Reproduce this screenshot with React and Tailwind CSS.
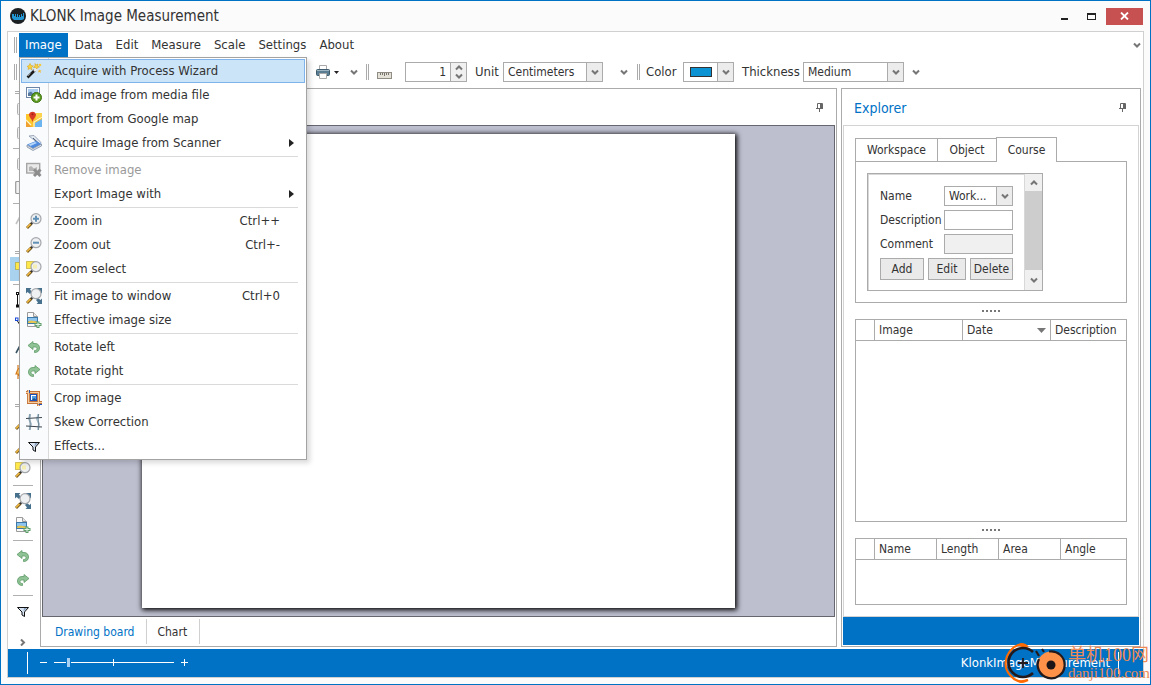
import { useState } from 'react';
import clsx from 'clsx';

/* ---------- icons ---------- */

function Svg({ children, className = 'w-4 h-4' }) {
  return (
    <svg viewBox="0 0 16 16" className={clsx('shrink-0', className)} fill="none" aria-hidden="true">
      {children}
    </svg>
  );
}

function WandIcon() {
  return (
    <Svg>
      <path d="M1.500 14.500 9 7" stroke="#1c1c1c" strokeWidth="2.600" />
      <path d="M2 13 4.500 10.500" stroke="#8a8a8a" strokeWidth="1" />
      <path d="M8 8 11 5.500" stroke="#e8e8e8" strokeWidth="2.600" />
      <path d="M1 3.500 3 2.500 4 0.500 5 2.500 7.500 3 5.500 4.500 6 7 4 5.500 2 6.500 2.500 4.500Z" fill="#f7d23a" stroke="#d39a1a" strokeWidth=".5" />
      <path d="M9 .500 10 2 12 1 11.500 3 13.500 4 11.500 4.500 11 6 9.500 4.500 7.500 4.500 9 3Z" fill="#f7d23a" stroke="#d39a1a" strokeWidth=".5" />
      <path d="M13 6.500 14 7.500 15.500 7 14.500 8.500 15 10 13.500 9 12 9.500 12.500 8Z" fill="#f3b93a" />
      <circle cx="14" cy="2" r="1.300" fill="#f6c93c" />
    </Svg>
  );
}

function AddPictureIcon() {
  return (
    <Svg>
      <rect x=".5" y=".5" width="13" height="10" fill="#fff" stroke="#6d86a8" />
      <rect x="2" y="2" width="10" height="7" fill="#a9cdf0" />
      <path d="M2 9V6L5 4.500 7 6.500 9 5 12 7V9Z" fill="#55789c" />
      <circle cx="10.500" cy="10.500" r="5" fill="#5c9a20" stroke="#3f7413" />
      <path d="M10.500 7.500V13.500M7.500 10.500H13.500" stroke="#fff" strokeWidth="2" />
    </Svg>
  );
}

function MapIcon() {
  return (
    <Svg>
      <path d="M0 3H16V16H0Z" fill="#fcc62c" />
      <path d="M0 10 6 16H0Z" fill="#f0a030" />
      <path d="M9 16V12L16 8V16Z" fill="#6db5f0" />
      <path d="M0 9 5 14M8 16V11L16 6" stroke="#fff4cf" strokeWidth="1.200" />
      <path d="M10 2H16V6L10 8Z" fill="#fbd34d" />
      <path d="M6.500 12C6.500 8 3 6.500 3 3.500A3.600 3.500 0 0 1 10 3.500C10 6.500 6.500 8 6.500 12Z" fill="#d93a25" />
      <circle cx="6.500" cy="3.300" r="1" fill="#a02216" />
    </Svg>
  );
}

function ScannerIcon() {
  return (
    <Svg>
      <path d="M3 1 8 .500 15 7.500 13 9Z" fill="#e6edf6" stroke="#8593a6" strokeWidth=".8" />
      <path d="M7 3 13 8.500" stroke="#44566e" strokeWidth="1" />
      <path d="M1 9.500 10 6 15.500 9 7 13.500Z" fill="#4f8be0" />
      <path d="M2.500 9.500 9 7 11 8 4.500 11Z" fill="#b8d8fa" />
      <path d="M1 10V12L7 15.500 15.500 11V9L7 13.500Z" fill="#d9dee6" stroke="#76859a" strokeWidth=".7" />
    </Svg>
  );
}

function RemovePictureIcon() {
  return (
    <Svg>
      <rect x=".7" y="1.500" width="13" height="9.500" fill="#e9e9e9" stroke="#a6a6a6" strokeWidth="1.400" />
      <path d="M3 9V5L5 4 8 6.500 11 5V9Z" fill="#b4b4b4" />
      <path d="M8 7.500 14.500 14M14.500 7.500 8 14" stroke="#8d8d8d" strokeWidth="3" />
    </Svg>
  );
}

function Lens({ children }) {
  return (
    <>
      <path d="M1 15 5.500 10.500" stroke="#7a5a1c" strokeWidth="2.800" />
      <path d="M1 14.500 4.500 11" stroke="#f0b840" strokeWidth="1.600" />
      <path d="M5 11 6.500 9.500" stroke="#333" strokeWidth="2" />
      <circle cx="10" cy="5.700" r="5" fill="#eef0f2" stroke="#a3a6aa" strokeWidth="1.200" />
      {children}
    </>
  );
}

function ZoomInIcon() {
  return (
    <Svg>
      <Lens><path d="M10 2.700V8.700M7 5.700H13" stroke="#5f8fb4" strokeWidth="2" /></Lens>
    </Svg>
  );
}

function ZoomOutIcon() {
  return (
    <Svg>
      <Lens><path d="M7 5.700H13" stroke="#5f8fb4" strokeWidth="2" /></Lens>
    </Svg>
  );
}

function ZoomSelectIcon() {
  return (
    <Svg>
      <rect x=".5" y=".5" width="9" height="7" fill="#ffe84a" stroke="#a8900c" strokeDasharray="1 1" />
      <Lens><path d="M7 3.500H11V7.500H7Z" fill="#f6efb4" /></Lens>
    </Svg>
  );
}

function FitIcon() {
  return (
    <Svg>
      <path d="M0 0H5.500L4 1.500 6 4 4 6 1.500 4 0 5.500ZM16 0H10.500L12 1.500 10 4 12 6 14.500 4 16 5.500ZM16 16H10.500L12 14.500 10 12 12 10 14.500 12 16 10.500Z" fill="#47708c" />
      <Lens />
    </Svg>
  );
}

function PageSizeIcon() {
  return (
    <Svg>
      <path d="M1.500.5H7.500L11.500 4.500V14.500H1.500Z" fill="#fafafa" stroke="#9a9a9a" />
      <path d="M7.500.5V4.500H11.500" stroke="#9a9a9a" fill="#e6e6e6" />
      <rect x="1" y="5" width="11" height="7" fill="#3c78a8" />
      <rect x="2" y="6" width="9" height="3" fill="#8cc4ee" />
      <path d="M2 9.500 5 8.500 11 9.500V11H2Z" fill="#e5c552" />
      <path d="M10.500 9.500H13.500V11H15.500V14H13.500V16H10.500V14H8.500V11H10.500Z" fill="#5f9e6b" />
      <path d="M12 10.500V15M9.500 12.500H14.500" stroke="#e6f4e7" strokeWidth="1" />
    </Svg>
  );
}

function RotateLeftIcon() {
  return (
    <Svg>
      <path d="M2 6.500 7 2.500V4.500H9C12 4.500 13.500 6.500 13.500 9S12 13.500 8.500 13.500V11.500C10.500 11.500 11 10.500 11 9.500S10 8 8.500 8H7V10.500Z" fill="#8fc294" stroke="#5e9a67" strokeWidth=".8" />
    </Svg>
  );
}

function RotateRightIcon() {
  return (
    <Svg>
      <path d="M14 6.500 9 2.500V4.500H7C4 4.500 2.500 6.500 2.500 9S4 13.500 7.500 13.500V11.500C5.500 11.500 5 10.500 5 9.500S6 8 7.500 8H9V10.500Z" fill="#8fc294" stroke="#5e9a67" strokeWidth=".8" />
    </Svg>
  );
}

function CropIcon() {
  return (
    <Svg>
      <path d="M2.500 0V12.500H16M0 2.500H12.500V16" stroke="#c4743a" strokeWidth="3" />
      <path d="M2.500 0V12.500H16M0 2.500H12.500V16" stroke="#f8cfa0" strokeWidth="1.200" />
      <rect x="4.500" y="4.500" width="6" height="6" fill="#fff" stroke="#1e52b8" />
      <path d="M6 6H10V10H6Z" fill="#4f9ce0" />
      <path d="M6 10 8 8 10 9.500V10Z" fill="#214f8a" />
      <path d="M3.500 0V3M12.500 14.500H16" stroke="#1e52b8" />
    </Svg>
  );
}

function SkewIcon() {
  return (
    <Svg>
      <path d="M4 0 3 5 5 10 3.500 16M12.500 0 11 5 13 10 12 16" stroke="#9db7c6" strokeWidth="1.800" />
      <path d="M0 4.500 16 3.500M0 12 16 13" stroke="#3d4852" strokeWidth="1.200" />
      <path d="M4 0V16M12.500 0V16" stroke="#5c7482" strokeWidth=".6" />
    </Svg>
  );
}

function FilterIcon() {
  return (
    <Svg>
      <path d="M2.500 4.500H13.500L9.500 9V13.500L7 12V9Z" fill="#d7e3f2" stroke="#111" />
      <path d="M9 5 12 5 8.500 8.500Z" fill="#8ea5c0" />
    </Svg>
  );
}

function SelectAreaIcon() {
  return (
    <Svg>
      <rect x=".5" y="1.500" width="13" height="7" fill="#ffe84a" stroke="#a8900c" strokeDasharray="1 1" />
    </Svg>
  );
}

function SegmentIcon() {
  return (
    <Svg>
      <path d="M2.500 2.500V13.500" stroke="#111" />
      <rect x="1.500" y=".5" width="2" height="2" fill="#fff" stroke="#111" />
      <rect x="1.500" y="13" width="2" height="2" fill="#fff" stroke="#111" />
    </Svg>
  );
}

function PolylineIcon() {
  return (
    <Svg>
      <path d="M1.500 3.500 5 9 13 5" stroke="#111" />
      <rect x=".5" y="2" width="2.500" height="2.500" fill="#fff" stroke="#1747d6" />
    </Svg>
  );
}

function TextIcon({ color = '#3b5563' }) {
  return (
    <Svg>
      <path d="M1 13 7 2 13 13M3.500 9H10.500" stroke={color} strokeWidth="1.600" />
    </Svg>
  );
}

function MarkerIcon() {
  return (
    <Svg>
      <path d="M3 1V5L1 10H3V15M3 5 8 3V13L3 10" fill="#f6c169" stroke="#d37a1e" strokeWidth="1.200" />
    </Svg>
  );
}

function DocIcon() {
  return (
    <Svg>
      <rect x="2.500" y="2.500" width="11" height="11" rx="1" fill="#f2f2f2" stroke="#b0b0b0" />
    </Svg>
  );
}

function ClipIcon() {
  return (
    <Svg>
      <rect x=".7" y="1.500" width="5" height="12" rx="1" fill="#f4f4f4" stroke="#999" strokeWidth="1.200" />
    </Svg>
  );
}

function Chevron({ className, up }) {
  return (
    <svg viewBox="0 0 8 7" className={clsx('w-2 h-[7px] shrink-0', className)} fill="none" aria-hidden="true">
      <path d={up ? 'M1 5.500 4 2.500 7 5.500' : 'M1 1.500 4 4.500 7 1.500'} stroke="#767676" strokeWidth="2" />
    </svg>
  );
}

function PinIcon() {
  return (
    <svg viewBox="0 0 8 9" className="w-2 h-[9px]" fill="none" aria-hidden="true">
      <path d="M1.500 5V.5H6.500V5M0 5.500H7M3.500 5V9" stroke="#666" />
      <path d="M4 1H6.500V5H4Z" fill="#666" />
    </svg>
  );
}

/* ---------- small parts ---------- */

function Grip() {
  return <span className="w-[3px] h-4 border-x border-[#ababab] shrink-0" />;
}

function SideGrip() {
  return (
    <div className="h-[9px] w-full flex items-center justify-center">
      <span className="w-4 h-[3px] border-y border-[#ababab]" />
    </div>
  );
}

function SideRule() {
  return (
    <div className="h-[7px] w-full flex items-center justify-center">
      <span className="w-5 h-px bg-[#b0b0b0]" />
    </div>
  );
}

function SideButton({ icon: Icon, label, active }) {
  return (
    <button
      type="button"
      aria-label={label}
      className={clsx('w-[26px] h-6 shrink-0 flex items-center justify-center', active && 'bg-[#a9d2ee]')}
    >
      <Icon />
    </button>
  );
}

function Select({ label, options, className }) {
  return (
    <span className={clsx('relative inline-block h-5 shrink-0', className)}>
      <select
        aria-label={label}
        className="appearance-none w-full h-full pl-1 pr-4 bg-white border border-[#ababab] text-xs leading-4 text-[#333] outline-none"
      >
        {options.map(option => <option key={option}>{option}</option>)}
      </select>
      <span className="absolute right-0 top-0 w-[17px] h-full border border-[#ababab] bg-[#ececec] flex items-center justify-center pointer-events-none">
        <Chevron />
      </span>
    </span>
  );
}

const MENUS = ['Image', 'Data', 'Edit', 'Measure', 'Scale', 'Settings', 'About'];

const IMAGE_MENU = [
  [
    { label: 'Acquire with Process Wizard', icon: WandIcon, active: true },
    { label: 'Add image from media file', icon: AddPictureIcon },
    { label: 'Import from Google map', icon: MapIcon },
    { label: 'Acquire Image from Scanner', icon: ScannerIcon, submenu: true },
  ],
  [
    { label: 'Remove image', icon: RemovePictureIcon, disabled: true },
    { label: 'Export Image with', submenu: true },
  ],
  [
    { label: 'Zoom in', icon: ZoomInIcon, keys: 'Ctrl++' },
    { label: 'Zoom out', icon: ZoomOutIcon, keys: 'Ctrl+-' },
    { label: 'Zoom select', icon: ZoomSelectIcon },
  ],
  [
    { label: 'Fit image to window', icon: FitIcon, keys: 'Ctrl+0' },
    { label: 'Effective image size', icon: PageSizeIcon },
  ],
  [
    { label: 'Rotate left', icon: RotateLeftIcon },
    { label: 'Rotate right', icon: RotateRightIcon },
  ],
  [
    { label: 'Crop image', icon: CropIcon },
    { label: 'Skew Correction', icon: SkewIcon },
    { label: 'Effects...', icon: FilterIcon },
  ],
];

function MenuItem({ item }) {
  const Icon = item.icon;
  return (
    <button
      type="button"
      role="menuitem"
      disabled={item.disabled}
      className={clsx(
        'w-full h-6 flex items-center border pl-1 text-left whitespace-nowrap',
        item.active ? 'bg-[#cce4f7] border-[#7eb4ea]' : 'border-transparent',
        item.disabled ? 'text-[#9a9a9a]' : 'text-[#333]'
      )}
    >
      <span className="w-7 flex shrink-0">{Icon && <Icon />}</span>
      <span className="grow">{item.label}</span>
      {item.keys && <span className="pr-6">{item.keys}</span>}
      {item.submenu && (
        <svg viewBox="0 0 5 8" className="w-[5px] h-2 mr-2.5" aria-hidden="true">
          <path d="M0 0 5 4 0 8Z" fill="#222" />
        </svg>
      )}
    </button>
  );
}

function ImageMenu() {
  return (
    <div
      role="menu"
      className="absolute left-0 top-full z-20 w-72 p-px border border-[#a3a3a3] bg-[linear-gradient(to_right,#fafbfd_28px,#dadada_28px,#dadada_29px,#ffffff_29px)] shadow-[3px_3px_5px_rgba(0,0,0,0.15)]"
    >
      {IMAGE_MENU.map((group, i) => (
        <div key={i}>
          {i > 0 && <div className="h-[3px] pl-[30px] pr-[7px] flex items-center"><hr className="w-full border-0 h-px bg-[#dadada]" /></div>}
          {group.map(item => <MenuItem key={item.label} item={item} />)}
        </div>
      ))}
    </div>
  );
}

function TitleBar() {
  return (
    <header className="h-[30px] shrink-0 flex items-center pl-[9px] pr-[7px]">
      <svg viewBox="0 0 16 16" className="w-4 h-4" aria-hidden="true">
        <circle cx="8" cy="8" r="8" fill="#1c1f22" />
        <path d="M2 6H4V8H5V6H6V9H7V6H8V9H9V7H10V9H11V6H12V8H13V5H14V11L12 12H4L2 10Z" fill="#2196d3" />
      </svg>
      <h1 className="ml-1 grow text-[15px] leading-5 text-[#333]">KLONK Image Measurement</h1>
      <button type="button" aria-label="Minimize" className="w-[27px] h-4 flex items-end justify-center pb-1">
        <span className="w-[7px] h-0.5 bg-[#222]" />
      </button>
      <button type="button" aria-label="Maximize" className="w-[27px] h-4 flex items-center justify-center">
        <span className="w-[9px] h-[7px] border border-t-2 border-[#222]" />
      </button>
      <button type="button" aria-label="Close" className="ml-px w-[37px] h-[17px] bg-[#c75050] flex items-center justify-center">
        <svg viewBox="0 0 9 8" className="w-[9px] h-2" aria-hidden="true">
          <path d="M1 .5 8 7.500M8 .5 1 7.500" stroke="#fff" strokeWidth="1.800" />
        </svg>
      </button>
    </header>
  );
}

function MenuBar() {
  return (
    <nav className="h-[25px] pt-px shrink-0 flex items-center pl-1.5 pr-0.5 text-[13px] leading-4 text-[#333]">
      <Grip />
      <div className="ml-0.5 flex grow gap-px">
        {MENUS.map(name => (
          <div key={name} className="relative">
            <button
              type="button"
              className={clsx('h-6 px-1.5', name === 'Image' && 'bg-[#0072c6] text-white')}
            >
              {name}
            </button>
            {name === 'Image' && <ImageMenu />}
          </div>
        ))}
      </div>
      <button type="button" aria-label="More menus"><Chevron /></button>
    </nav>
  );
}

function ToolBar() {
  const [scale, setScale] = useState(1);
  return (
    <div className="h-[31px] pb-px shrink-0 flex items-center pl-1.5 text-[13px] leading-4 text-[#333]">
      <Grip />
      <div className="w-[299px] shrink-0" />
      <button type="button" aria-label="Print" className="flex items-center gap-1">
        <svg viewBox="0 0 14 14" className="w-3.5 h-3.5" fill="none" aria-hidden="true">
          <path d="M3.500 5V.5H10.500V5" fill="#fff" stroke="#a9a9a9" />
          <rect x=".5" y="4.500" width="13" height="6" rx="1" fill="#5b7d92" stroke="#3f5c6e" />
          <path d="M1 5.500H13" stroke="#9fb6c4" />
          <path d="M3.500 8.500H10.500V13.500H3.500Z" fill="#fff" stroke="#a9a9a9" />
        </svg>
        <svg viewBox="0 0 5 3" className="w-[5px] h-[3px]" aria-hidden="true"><path d="M0 0H5L2.500 3Z" fill="#222" /></svg>
      </button>
      <Chevron className="ml-[11px]" />
      <span className="w-2" />
      <Grip />
      <button type="button" aria-label="Ruler" className="ml-2 mt-1.5">
        <svg viewBox="0 0 15 7" className="w-[15px] h-[7px]" fill="none" aria-hidden="true">
          <rect x=".5" y=".5" width="14" height="6" fill="#e3e1d8" stroke="#8f8d84" />
          <path d="M3.500 1V3M5.500 1V3M7.500 1V4M9.500 1V3M11.500 1V3" stroke="#77756d" />
        </svg>
      </button>
      <span className="ml-[13px] flex h-5 w-[62px] shrink-0 border border-[#ababab]">
        <input
          aria-label="Scale value"
          value={scale}
          onChange={e => setScale(e.target.value)}
          className="w-11 pr-1 text-right text-xs outline-none bg-white"
        />
        <span className="flex flex-col grow border-l border-[#ababab] bg-[#f0f0f0]">
          <button type="button" aria-label="Increase" className="h-[9px] flex items-center justify-center" onClick={() => setScale(Number(scale) + 1)}><Chevron up /></button>
          <button type="button" aria-label="Decrease" className="h-[9px] flex items-center justify-center" onClick={() => setScale(Number(scale) - 1)}><Chevron /></button>
        </span>
      </span>
      <span className="w-7 ml-2 shrink-0">Unit</span>
      <Select label="Unit" options={['Centimeters', 'Millimeters', 'Inches']} className="w-[100px]" />
      <Chevron className="ml-[17px]" />
      <span className="w-[9px]" />
      <Grip />
      <span className="ml-1.5 w-[37px] shrink-0">Color</span>
      <button type="button" aria-label="Color" className="w-[51px] h-5 shrink-0 flex border border-[#ababab]">
        <span className="w-[33px] h-full flex items-center justify-center">
          <span className="w-[22px] h-2.5 border border-[#333] bg-[#0c93d4]" />
        </span>
        <span className="grow h-full flex items-center justify-center border-l border-[#ababab] bg-[#ececec]"><Chevron /></span>
      </button>
      <span className="ml-2 w-[61px] shrink-0">Thickness</span>
      <Select label="Thickness" options={['Medium', 'Thin', 'Thick']} className="w-[101px]" />
      <Chevron className="ml-2" />
    </div>
  );
}

function SideBar() {
  return (
    <aside className="w-[30px] mr-0.5 shrink-0 flex flex-col items-center px-0.5 overflow-hidden">
      <SideGrip />
      <SideButton icon={DocIcon} label="New" />
      <SideButton icon={DocIcon} label="Open" />
      <SideRule />
      <SideButton icon={DocIcon} label="Copy" />
      <SideButton icon={ClipIcon} label="Paste" />
      <SideRule />
      <SideButton icon={() => <TextIcon color="#c4c4c4" />} label="Label" />
      <div className="h-[17px] shrink-0" />
      <SideGrip />
      <SideButton icon={SelectAreaIcon} label="Select" active />
      <SideRule />
      <SideButton icon={SegmentIcon} label="Segment" />
      <SideButton icon={PolylineIcon} label="Polyline" />
      <SideButton icon={TextIcon} label="Text" />
      <SideButton icon={MarkerIcon} label="Marker" />
      <div className="h-[17px] shrink-0" />
      <SideGrip />
      <SideButton icon={ZoomInIcon} label="Zoom in" />
      <SideButton icon={ZoomOutIcon} label="Zoom out" />
      <SideButton icon={ZoomSelectIcon} label="Zoom select" />
      <SideRule />
      <SideButton icon={FitIcon} label="Fit image to window" />
      <SideButton icon={PageSizeIcon} label="Effective image size" />
      <SideRule />
      <SideButton icon={RotateLeftIcon} label="Rotate left" />
      <SideButton icon={RotateRightIcon} label="Rotate right" />
      <SideRule />
      <SideButton icon={FilterIcon} label="Effects" />
      <button type="button" aria-label="More tools" className="mt-4">
        <Chevron className="-rotate-90" />
      </button>
    </aside>
  );
}

function DrawingBoard() {
  return (
    <main className="grow min-w-0 flex flex-col border border-[#ababab] bg-white text-xs leading-4">
      <div className="h-9 shrink-0 flex items-center justify-end pr-3">
        <button type="button" aria-label="Pin drawing board"><PinIcon /></button>
      </div>
      <div className="grow min-h-0 mx-px border border-[#66666e] bg-[#bdbfcf] flex justify-center py-2 overflow-hidden">
        <div className="h-full aspect-[5/4] bg-white shadow-[1px_1px_5px_1px_#000]" />
      </div>
      <div className="h-[29px] shrink-0 flex items-center">
        <button type="button" className="h-[25px] pl-3.5 pr-3 border-r border-[#d0d0d0] text-[#0072c6]">Drawing board</button>
        <button type="button" className="h-[25px] pl-2.5 pr-3 border-r border-[#d0d0d0] text-[#333]">Chart</button>
      </div>
    </main>
  );
}

function Splitter() {
  return (
    <div className="h-4 shrink-0 flex items-center justify-center gap-0.5">
      {[0, 1, 2, 3, 4].map(i => <span key={i} className="w-0.5 h-0.5 bg-[#777]" />)}
    </div>
  );
}

function HeadCell({ children, className }) {
  return <th scope="col" className={clsx('h-[21px] pl-1 text-left font-normal border-b border-l border-[#ababab]', className)}>{children}</th>;
}

function CourseForm() {
  const button = 'h-[22px] border border-[#ababab] bg-[#eaeaea] text-center';
  return (
    <div className="w-44 h-[118px] flex border border-[#ababab]">
      <form className="grow border-t border-l border-[#d8d8d8] pl-[11px] pt-[11px]">
        <div className="grid grid-cols-[64px_69px] gap-y-1 items-center">
          <span>Name</span>
          <Select label="Name" options={['Work...']} className="w-[69px]" />
          <label htmlFor="description">Description</label>
          <input id="description" className="h-5 w-full px-1 border border-[#ababab] bg-white outline-none" />
          <label htmlFor="comment">Comment</label>
          <input id="comment" disabled className="h-5 w-full px-1 border border-[#ababab] bg-[#f0f0f0]" />
        </div>
        <div className="mt-1 flex gap-1">
          <button type="button" className={clsx(button, 'w-11')}>Add</button>
          <button type="button" className={clsx(button, 'w-[38px]')}>Edit</button>
          <button type="button" className={clsx(button, 'w-[43px]')}>Delete</button>
        </div>
      </form>
      <div className="w-[18px] flex flex-col bg-[#cdcdcd] border-l border-[#d8d8d8]">
        <button type="button" aria-label="Scroll up" className="h-[17px] bg-[#f0f0f0] flex items-center justify-center"><Chevron up /></button>
        <div className="grow" />
        <button type="button" aria-label="Scroll down" className="h-5 bg-[#f0f0f0] flex items-center justify-center"><Chevron /></button>
      </div>
    </div>
  );
}

function Explorer() {
  const tab = 'border border-[#ababab] text-center';
  return (
    <aside className="w-[300px] shrink-0 flex flex-col p-px border border-[#ababab] bg-white text-xs leading-4 text-[#333]">
      <div className="h-[35px] shrink-0 flex items-center justify-between pl-[11px] pr-3">
        <h2 className="text-sm leading-4 text-[#0072c6]">Explorer</h2>
        <button type="button" aria-label="Pin explorer"><PinIcon /></button>
      </div>
      <div className="grow min-h-0 flex flex-col border border-[#d3d3d3] px-[11px] pt-[11px] pb-[11px]">
        <div role="tablist" className="h-6 shrink-0 flex items-end">
          <button type="button" role="tab" className={clsx(tab, 'w-[83px] h-[23px] border-b-0')}>Workspace</button>
          <button type="button" role="tab" className={clsx(tab, 'w-[58px] h-[23px] border-b-0 border-x-0')}>Object</button>
          <button type="button" role="tab" aria-selected="true" className={clsx(tab, 'w-[61px] h-[25px] border-b-0 bg-white relative top-px')}>Course</button>
        </div>
        <div role="tabpanel" className="h-[142px] shrink-0 border border-[#ababab] p-[11px]">
          <CourseForm />
        </div>
        <Splitter />
        <div className="grow min-h-0 border border-[#ababab]">
          <table className="w-full table-fixed border-separate border-spacing-0">
            <thead>
              <tr>
                <HeadCell className="w-[18px] border-l-0" />
                <HeadCell className="w-[88px]">Image</HeadCell>
                <HeadCell className="w-[88px]">
                  <span className="flex items-center justify-between pr-1">
                    Date
                    <svg viewBox="0 0 9 5" className="w-[9px] h-[5px]" aria-hidden="true"><path d="M0 0H9L4.500 5Z" fill="#777" /></svg>
                  </span>
                </HeadCell>
                <HeadCell>Description</HeadCell>
              </tr>
            </thead>
          </table>
        </div>
        <Splitter />
        <div className="h-[67px] shrink-0 border border-[#ababab]">
          <table className="w-full table-fixed border-separate border-spacing-0">
            <thead>
              <tr>
                <HeadCell className="w-[18px] border-l-0" />
                <HeadCell className="w-[62px]">Name</HeadCell>
                <HeadCell className="w-[62px]">Length</HeadCell>
                <HeadCell className="w-[62px]">Area</HeadCell>
                <HeadCell>Angle</HeadCell>
              </tr>
            </thead>
          </table>
        </div>
      </div>
      <div className="h-7 shrink-0 bg-[#0072c6]" />
    </aside>
  );
}

function StatusBar() {
  return (
    <footer className="h-7 mt-0.5 pb-px shrink-0 flex items-center bg-[#0072c6] text-white text-[13px] leading-4">
      <span className="ml-[19px] w-px h-[22px] bg-white" />
      <button type="button" aria-label="Zoom out" className="ml-3 w-2 h-4 flex items-center">
        <span className="w-[7px] h-px bg-white" />
      </button>
      <div className="relative ml-1.5 h-4 w-[120px] flex items-center">
        <input
          type="range"
          aria-label="Zoom"
          defaultValue="11"
          className="w-full h-4 appearance-none bg-transparent [&::-webkit-slider-runnable-track]:h-px [&::-webkit-slider-runnable-track]:bg-white [&::-webkit-slider-thumb]:appearance-none [&::-webkit-slider-thumb]:-mt-1 [&::-webkit-slider-thumb]:w-[3px] [&::-webkit-slider-thumb]:h-[9px] [&::-webkit-slider-thumb]:bg-[#a5d0f3] [&::-webkit-slider-thumb]:shadow-[0_0_0_1px_#0072c6]"
        />
        <span className="absolute left-[59px] top-1 w-px h-[7px] bg-white" />
      </div>
      <button type="button" aria-label="Zoom in" className="ml-[7px] w-[7px] h-4 flex items-center">
        <svg viewBox="0 0 7 7" className="w-[7px] h-[7px]" aria-hidden="true"><path d="M3.500 0V7M0 3.500H7" stroke="#fff" /></svg>
      </button>
      <span className="ml-auto">KlonkImageMeasurement</span>
      <span className="ml-2 mr-6 w-px h-[22px] bg-white" />
    </footer>
  );
}

function Watermark() {
  return (
    <div className="absolute right-0 bottom-0 z-30 flex items-center pointer-events-none">
      <svg viewBox="0 0 64 42" className="w-16 h-[42px]" fill="none" aria-hidden="true">
        <path d="M25 5C20 0 12 3 8 8 1 16 1 27 7 33 11 38 18 42 25 38" stroke="#ff6a00" strokeWidth="2.200" />
        <path d="M14 3C18 0 23 1 25 5L21 6ZM14 39C18 42 23 41 25 37L20 38Z" fill="#ff6a00" />
        <path d="M30 10A14.500 14.500 0 1 0 30 31" stroke="#241a1c" strokeWidth="2.600" />
        <path d="M20 16V26M15 21H25" stroke="#241a1c" strokeWidth="1.800" />
        <circle cx="48" cy="23" r="13.500" fill="#ff9248" />
        <path d="M46 9.500A13.500 13.500 0 1 1 36 17M33 9 36 14M39 7 41 10" stroke="#241a1c" strokeWidth="2.200" />
        <circle cx="48" cy="23" r="4.500" fill="#1c1517" />
      </svg>
      <div className="ml-px text-[#ef8a55] font-[family-name:'Liberation_Serif','Noto_Sans_CJK_SC',serif] whitespace-nowrap">
        <div className="text-lg leading-5">单机100网</div>
        <div className="text-[15px] leading-4">danji100.com</div>
      </div>
    </div>
  );
}

export default function App() {
  return (
    <div className="relative h-screen flex flex-col overflow-hidden border border-[#0072c6] bg-[#fbfbfb] font-[family-name:'DejaVu_Sans_Condensed','Noto_Sans',sans-serif]">
      <TitleBar />
      <div className="grow min-h-0 mx-1.5 mb-1.5 flex flex-col border border-[#d0d0d0] bg-white">
        <MenuBar />
        <ToolBar />
        <div className="grow min-h-0 flex pr-0.5">
          <SideBar />
          <DrawingBoard />
          <div className="w-1 shrink-0" />
          <Explorer />
        </div>
        <StatusBar />
      </div>
      <Watermark />
    </div>
  );
}
